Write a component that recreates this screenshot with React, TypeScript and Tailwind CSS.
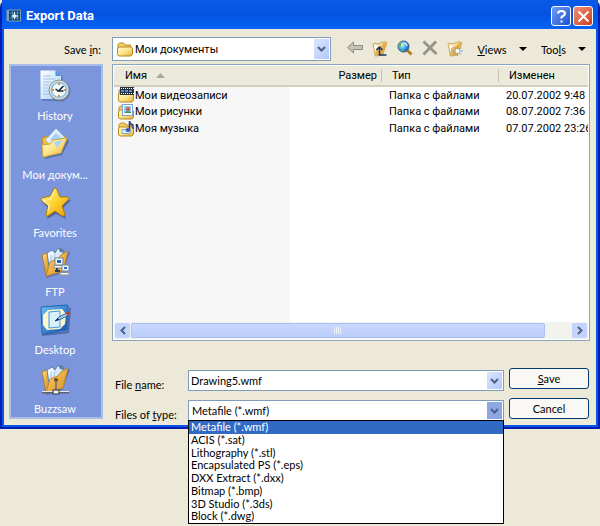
import type { ReactNode } from "react";

const files = [
  { name: "Мои видеозаписи", kind: "video", type: "Папка с файлами", modified: "20.07.2002 9:48" },
  { name: "Мои рисунки", kind: "picture", type: "Папка с файлами", modified: "08.07.2002 7:36" },
  { name: "Моя музыка", kind: "music", type: "Папка с файлами", modified: "07.07.2002 23:26" },
];

const fileTypes = [
  "Metafile (*.wmf)",
  "ACIS (*.sat)",
  "Lithography (*.stl)",
  "Encapsulated PS (*.eps)",
  "DXX Extract (*.dxx)",
  "Bitmap (*.bmp)",
  "3D Studio (*.3ds)",
  "Block (*.dwg)",
];

// gradients shared by all of the icons
function IconDefs() {
  return (
    <svg width="0" height="0" className="absolute" aria-hidden="true">
      <defs>
        <linearGradient id="folder" x1="0" y1="0" x2="1" y2="1">
          <stop offset="0" stopColor="#fffbd0" />
          <stop offset="0.5" stopColor="#fce48a" />
          <stop offset="1" stopColor="#e5ae35" />
        </linearGradient>
        <linearGradient id="orange" x1="0" y1="0" x2="1" y2="1">
          <stop offset="0" stopColor="#ffe0a0" />
          <stop offset="0.4" stopColor="#f0b850" />
          <stop offset="1" stopColor="#d08a1c" />
        </linearGradient>
        <linearGradient id="paper" x1="0" y1="0" x2="1" y2="1">
          <stop offset="0" stopColor="#ffffff" />
          <stop offset="1" stopColor="#a9d0f4" />
        </linearGradient>
        <linearGradient id="star" x1="0" y1="0" x2="1" y2="1">
          <stop offset="0" stopColor="#fff29a" />
          <stop offset="0.5" stopColor="#fdd32e" />
          <stop offset="1" stopColor="#eb9a12" />
        </linearGradient>
        <linearGradient id="pad" x1="0" y1="0" x2="1" y2="1">
          <stop offset="0" stopColor="#6fc0f8" />
          <stop offset="1" stopColor="#0c4fae" />
        </linearGradient>
        <radialGradient id="lens" cx="0.35" cy="0.35" r="0.7">
          <stop offset="0" stopColor="#d8f6ff" />
          <stop offset="0.5" stopColor="#4db4e8" />
          <stop offset="1" stopColor="#1558a8" />
        </radialGradient>
      </defs>
    </svg>
  );
}

function HistoryIcon() {
  return (
    <svg width="32" height="32" viewBox="0 0 32 32">
      <path d="M3 2h16l5 5v24H3z" fill="#48629f" opacity="0.5" />
      <path d="M1.500 .5h15l5.500 5.500v23h-20.500z" fill="url(#paper)" />
      <path d="M16.500.5l5.500 5.500h-5.500z" fill="#4d95dc" />
      <path d="M4 6h8M4 9h12M4 12h8M4 15h6M4 18h5M4 21h5M4 24h6" stroke="#9fc4ea" />
      <circle cx="21" cy="21" r="10.500" fill="#52668f" opacity="0.6" />
      <circle cx="20" cy="20" r="10" fill="#dde0e0" stroke="#8c8f94" />
      <circle cx="20" cy="20" r="7.500" fill="#f3fbff" stroke="#83bde0" strokeWidth="1.500" />
      <path d="M24.500 16l-5 5 5 0M19.500 21l-3-2" stroke="#182436" strokeWidth="1.500" fill="none" />
      <path d="M20 13v2M20 25v2M13 20h2M25 20h2" stroke="#e38d3a" strokeWidth="2" />
    </svg>
  );
}

function DocumentsIcon() {
  return (
    <svg width="32" height="32" viewBox="0 0 32 32">
      <path d="M5 30l18-4 7-14-3-3z" fill="#39528f" opacity="0.6" />
      <path d="M3 9l5-2 3 2 15-2 2 4-8 12-15 5z" fill="#e9bd4b" stroke="#b98b22" />
      <path d="M17 0l10 10-8 13-12-12z" fill="url(#paper)" stroke="#c7dff5" />
      <path d="M17 4l6 6-5 6-7-6z" fill="#a4d2fb" />
      <path d="M3 16l8-1 3-4 14-2-6 15-18 4z" fill="url(#folder)" stroke="#d0a43e" />
      <path d="M15 13l9-2-6 8z" fill="#a7d4ef" />
    </svg>
  );
}

function StarIcon() {
  return (
    <svg width="32" height="32" viewBox="0 0 32 32">
      <path d="M18 3l4 9 10 1-8 8 3 11-10-5-9 5 2-10-7-7 10-3z" fill="#3c4a78" opacity="0.65" />
      <path
        d="M16 1q2 0 2.500 3l2.500 6 8 0q2 1 0 3l-6 6 3 8q0 3-3 2l-7-5-7 5q-3 1-2-2l2-8-6-5q-2-2 0-3l8-2 3-5q0-3 2-3z"
        fill="url(#star)"
        stroke="#a87711"
      />
      <path d="M15 4l-3 8-8 2 6 4-1 6" stroke="#fff8c8" fill="none" />
    </svg>
  );
}

// open orange folder with blue sheets, base of the FTP and Buzzsaw places
function OpenFolder() {
  return (
    <>
      <path d="M7 31l16-5 7-20" stroke="#3d4c78" strokeWidth="2" fill="none" opacity="0.5" />
      <path d="M3 9l4-2 2 2 1 18-3 3z" fill="url(#orange)" stroke="#a87c34" />
      <path d="M8 7l5-3 3 3 3-5 6 2-3 17-11 6z" fill="url(#paper)" stroke="#6483a8" />
      <path d="M19 2l5 1 1 4-4-1z" fill="#587fac" />
      <path d="M12 9v14M16 8l-2 12" stroke="#a4c5e2" />
      <path d="M11 16l8-3 3-4 7-4-5 20-17 5z" fill="url(#orange)" stroke="#c48a2c" />
    </>
  );
}

function FtpIcon() {
  return (
    <svg width="32" height="32" viewBox="0 0 32 32">
      <OpenFolder />
      <rect x="16" y="12" width="8" height="7" fill="#f2f5f6" stroke="#7a8794" />
      <rect x="18" y="14" width="4" height="3" fill="#2468c7" />
      <path d="M15 19.500h10v2.500h-10z" fill="#f4f4f2" stroke="#8a9198" />
      <rect x="23" y="19" width="7" height="6" fill="#f2f5f6" stroke="#7a8794" />
      <rect x="25" y="21" width="3" height="2" fill="#2468c7" />
      <path d="M21 26.500h9v2.500h-9z" fill="#f4f4f2" stroke="#8a9198" />
      <path d="M18 22v4M16 25h5" stroke="#28405c" fill="none" strokeWidth="2" />
    </svg>
  );
}

function DesktopIcon() {
  return (
    <svg width="32" height="32" viewBox="0 0 32 32">
      <path d="M3 31l26-3 2-24" stroke="#334981" strokeWidth="2" fill="none" opacity="0.6" />
      <path d="M2 4q0-1 1-1l25-2q1 0 1 1l-1 23q0 1-1 1L4 30q-1 0-1-1z" fill="url(#pad)" stroke="#1e63ae" />
      <path d="M9 6l14-1 4 5-1 10-5 5-13 1-4-5V11z" fill="#fff6cc" />
      <path d="M10 8l11-1v16l-11 1z" fill="#d9f0ff" stroke="#3f96e0" />
      <path d="M16 17l4-4 8-4 2 2-8 4z" fill="#a6d4f4" stroke="#2367a9" />
      <path d="M27 9l3-1 1 2-3 2z" fill="#d43b24" />
      <path d="M16 17l3-3 1 2z" fill="#17283c" />
    </svg>
  );
}

function BuzzsawIcon() {
  return (
    <svg width="32" height="32" viewBox="0 0 32 32">
      <OpenFolder />
      <circle cx="17" cy="17" r="2" fill="#6b4b21" />
      <path d="M17 18v10" stroke="#7f7b70" strokeWidth="2" />
      <path d="M3 29.500h27" stroke="#5c6474" strokeWidth="2" />
      <path d="M3 28.500h27" stroke="#e9e9e2" />
      <rect x="14" y="27" width="6" height="4" fill="#efefe9" stroke="#30343c" />
    </svg>
  );
}

const places: { label: string; icon: ReactNode }[] = [
  { label: "History", icon: <HistoryIcon /> },
  { label: "Мои докум...", icon: <DocumentsIcon /> },
  { label: "Favorites", icon: <StarIcon /> },
  { label: "FTP", icon: <FtpIcon /> },
  { label: "Desktop", icon: <DesktopIcon /> },
  { label: "Buzzsaw", icon: <BuzzsawIcon /> },
];

function FolderIcon({ kind }: { kind?: string }) {
  return (
    <svg width="16" height="16" viewBox="0 0 16 16" className="shrink-0">
      <path d="M1 14.500V3.500L2.500 2h4L8 4h5.500v2" fill="#f3cf62" stroke="#b98a20" />
      <path d="M.5 13.500V7.500L2.500 6h11.500l1.500 1v6.500l-1.500 1.500h-12z" fill="url(#folder)" stroke="#b98a20" />
      {kind === "video" && (
        <>
          <path d="M2 0h14v8H2z" fill="#27303f" />
          <path d="M3 1.500h13M3 6.500h13" stroke="#fff" strokeDasharray="1 1" />
          <path d="M3 4h12" stroke="#5a8fc4" strokeWidth="2" strokeDasharray="3 1" />
        </>
      )}
      {kind === "picture" && (
        <>
          <rect x="4.500" y=".5" width="10" height="11" fill="#fff" stroke="#7fa3cf" />
          <rect x="6" y="2" width="7" height="7" fill="#8ccaf6" />
          <circle cx="10" cy="5" r="2" fill="#d85b3d" />
          <path d="M6 9l3-2 4 1v1z" fill="#3c9550" />
        </>
      )}
      {kind === "music" && (
        <>
          <path d="M4 8.500h8v4H4z" fill="#d8edff" stroke="#84a8c8" />
          <path d="M11.500 9V0q0 3 3.500 4v4" stroke="#27408c" strokeWidth="1.500" fill="none" />
          <ellipse cx="10" cy="9" rx="2.500" ry="2" fill="#3a5fb5" />
        </>
      )}
    </svg>
  );
}

function DropArrow({ pressed }: { pressed?: boolean }) {
  return (
    <span
      className={
        pressed
          ? "flex w-[15px] shrink-0 items-center justify-center self-stretch bg-[#8ea6e4]"
          : "flex w-[15px] shrink-0 items-center justify-center self-stretch bg-linear-to-br from-[#dbe5fe] to-[#b2c8f8]"
      }
      aria-hidden="true"
    >
      <svg width="9" height="6" viewBox="0 0 9 6">
        <path d="M1 1l3.500 3.500L8 1" fill="none" stroke="#4d6185" strokeWidth="2" />
      </svg>
    </span>
  );
}

function ToolbarFolder() {
  return (
    <>
      <path d="M1 5l2-1 2 1 8-2.500 1.500 2-4 11.500-7 1z" fill="#f7dfa0" stroke="#c9a863" />
      <path d="M2 6q3-1 4 1l-2 9z" fill="#fffdf2" />
      <path d="M5 9l4-1 2-3 4-2-4 12-8 2z" fill="url(#orange)" stroke="#dcae58" />
    </>
  );
}

function Toolbar() {
  return (
    <div className="flex items-center gap-[9px]">
      <button type="button" aria-label="Back">
        <svg width="16" height="20" viewBox="0 0 16 20">
          <path d="M.5 8.500L6.500 3v3.500h9v4h-9V14z" fill="#c4c2b6" stroke="#8f8d82" />
        </svg>
      </button>
      <button type="button" aria-label="Up one level">
        <svg width="16" height="20" viewBox="0 0 16 20">
          <ToolbarFolder />
          <path d="M4.500 11L7.500 8 10.500 11M7.500 8.500v7.500h7" fill="none" stroke="#14386e" strokeWidth="1.500" />
        </svg>
      </button>
      <button type="button" aria-label="Search the Web">
        <svg width="16" height="20" viewBox="0 0 16 20">
          <path d="M10.500 11.500l4 4" stroke="#b77a25" strokeWidth="3" />
          <circle cx="6.500" cy="7.500" r="5.500" fill="url(#lens)" stroke="#315c91" />
          <path d="M1.500 8q0-4 3-5 0 4-1 5zM3 11q3-1 4 1-2 1-4-1z" fill="#5eb956" />
          <path d="M7 4q3 0 3 3" stroke="#fff" fill="none" />
        </svg>
      </button>
      <button type="button" aria-label="Delete">
        <svg width="16" height="20" viewBox="0 0 16 20">
          <path d="M1.500 2.500L14.500 15M14 2.500L1.500 15.500" stroke="#97958a" strokeWidth="3" />
        </svg>
      </button>
      <button type="button" aria-label="Create new folder">
        <svg width="16" height="20" viewBox="0 0 16 20">
          <ToolbarFolder />
          <path d="M10.500 7v10M5.500 12h10M7 8.500l7 7M14 8.500l-7 7" stroke="#5aa6ea" />
          <circle cx="10.500" cy="12" r="2" fill="#fff" />
        </svg>
      </button>
    </div>
  );
}

function MenuButton({ children }: { children: ReactNode }) {
  return (
    <button type="button" className="flex items-center gap-3">
      <span>{children}</span>
      <svg width="8" height="4" viewBox="0 0 8 4" aria-hidden="true">
        <path d="M0 0h8L4 4z" fill="#000" />
      </svg>
    </button>
  );
}

function TitleBar() {
  return (
    <header className="flex h-[29px] items-center gap-1 bg-linear-to-b from-[#0a5ae8] via-[#0553e3] to-[#0463f5] pt-[3px] pr-[5px] pl-1">
      <svg width="16" height="14" viewBox="0 0 15 14" aria-hidden="true">
        <path d="M0 1h3v11H0z" fill="#8fa0ae" />
        <path d="M2 1h12v11H2z" fill="#123d68" stroke="#7ba4bd" />
        <path d="M3 4h10M3 9h10M6 2v9M11 2v9" stroke="#4b91bf" />
        <path d="M8 2l1 4 4 1-4 1-1 3-1-3-3-1 3-1z" fill="#e7fbff" />
      </svg>
      <h1 className="grow font-['Roboto',sans-serif] text-[13px] leading-[16px] font-bold text-white">
        Export Data
      </h1>
      <div className="flex gap-[2px]">
        <button
          type="button"
          aria-label="Help"
          className="flex h-5 w-5 items-center justify-center rounded-[3px] border border-white bg-linear-to-br from-[#6f9cf4] to-[#1c4fd0]"
        >
          <svg width="13" height="15" viewBox="0 0 13 15">
            <path
              d="M3 4.500Q3 2 6.500 2T10 4.500Q10 6 8 7T6.500 9.500M6.500 11.500v2"
              fill="none"
              stroke="#fff"
              strokeWidth="2"
            />
          </svg>
        </button>
        <button
          type="button"
          aria-label="Close"
          className="flex h-5 w-5 items-center justify-center rounded-[3px] border border-white bg-linear-to-br from-[#ee9078] to-[#cc3a10]"
        >
          <svg width="13" height="13" viewBox="0 0 13 13">
            <path d="M1.500 1.500l10 10M11.500 1.500l-10 10" stroke="#fff" strokeWidth="2" />
          </svg>
        </button>
      </div>
    </header>
  );
}

function FileList() {
  return (
    <div className="flex h-[277px] flex-col border border-[#8ba5bd] bg-white p-px font-['Roboto',sans-serif] text-[11px]">
      <div className="grow overflow-hidden bg-[linear-gradient(90deg,#f7f7f7_176px,#ffffff_176px)]">
        <table className="w-full table-fixed border-collapse whitespace-nowrap">
          <thead>
            <tr className="h-[20px] border-b-2 border-[#d2cfbd] bg-[#ebeadb] text-left">
              <th className="w-[176px] pl-[11px] font-normal">
                <span className="flex items-center gap-[9px]">
                  Имя
                  <svg width="9" height="5" viewBox="0 0 9 5" aria-hidden="true">
                    <path d="M4.500 0L9 5H0z" fill="#aca899" />
                  </svg>
                </span>
              </th>
              <th className="w-[92px] text-right font-normal">
                <span className="block border-r border-[#c7c5b2] pr-1">Размер</span>
              </th>
              <th className="w-[117px] pl-[10px] font-normal">
                <span className="block border-r border-[#c7c5b2]">Тип</span>
              </th>
              <th className="pl-[10px] font-normal">Изменен</th>
            </tr>
          </thead>
          <tbody>
            {files.map((file) => (
              <tr key={file.name} className="h-[17px]">
                <td className="pl-1">
                  <span className="flex items-center gap-px">
                    <FolderIcon kind={file.kind} />
                    {file.name}
                  </span>
                </td>
                <td></td>
                <td className="pl-[7px]">{file.type}</td>
                <td className="pl-[7px]">{file.modified}</td>
              </tr>
            ))}
          </tbody>
        </table>
      </div>
      <div className="flex h-[17px] shrink-0 gap-px bg-[#f3f3ee] p-px">
        <button
          type="button"
          aria-label="Scroll left"
          className="flex w-[15px] items-center justify-center rounded-xs bg-[#c3d3fd]"
        >
          <svg width="6" height="9" viewBox="0 0 6 9">
            <path d="M5 1L1.500 4.500 5 8" fill="none" stroke="#4d6185" strokeWidth="2" />
          </svg>
        </button>
        <div className="flex grow">
          <div className="flex w-[94%] items-center justify-center gap-px rounded-xs border border-[#a9c0f5] bg-linear-to-b from-[#cad8ff] to-[#bacdfb]">
            <span className="h-[7px] w-px bg-[#eef4fe]"></span>
            <span className="h-[7px] w-px bg-[#eef4fe]"></span>
            <span className="h-[7px] w-px bg-[#eef4fe]"></span>
            <span className="h-[7px] w-px bg-[#eef4fe]"></span>
          </div>
        </div>
        <button
          type="button"
          aria-label="Scroll right"
          className="flex w-[15px] items-center justify-center rounded-xs bg-[#c3d3fd]"
        >
          <svg width="6" height="9" viewBox="0 0 6 9">
            <path d="M1 1l3.500 3.500L1 8" fill="none" stroke="#4d6185" strokeWidth="2" />
          </svg>
        </button>
      </div>
    </div>
  );
}

export default function App() {
  return (
    <div className="min-h-screen bg-[#ece9d8] font-['Lato','Roboto',sans-serif] text-[11px] leading-[13px] text-black">
      <IconDefs />
      <main className="rounded-t-[7px] border-x-2 border-b-2 border-[#0420b4] bg-[#0855e6]">
        <TitleBar />
        <div className="mx-[2px] grid grid-cols-[94px_minmax(0,1fr)] gap-x-[9px] gap-y-[3px] bg-[#ece9d8] pt-2 pr-[6px] pb-1 pl-[5px]">
          <label htmlFor="folder-select" className="self-center pr-[2px] text-right">
            Save <u>i</u>n:
          </label>
          <div className="flex h-6 items-center">
            <div className="flex h-6 w-[219px] items-center border border-[#7f9db9] bg-white p-px pl-1">
              <FolderIcon />
              <select
                id="folder-select"
                className="min-w-0 grow appearance-none bg-transparent pl-[2px] font-['Roboto',sans-serif] text-[11px] outline-none"
              >
                <option>Мои документы</option>
              </select>
              <DropArrow />
            </div>
            <div className="flex grow items-center justify-between pr-1 pl-4">
              <Toolbar />
              <MenuButton>
                <u>V</u>iews
              </MenuButton>
              <MenuButton>
                Too<u>l</u>s
              </MenuButton>
            </div>
          </div>

          <nav className="mb-[2px] border-2 border-[#a9bde8] bg-[#7b96dc]">
            <ul className="flex h-full flex-col pr-[2px]">
              {places.map((place) => (
                <li key={place.label} className="flex-1">
                  <a href="#" className="flex flex-col items-center gap-[6px] pt-1 text-white">
                    {place.icon}
                    <span className="leading-[16px]">{place.label}</span>
                  </a>
                </li>
              ))}
            </ul>
          </nav>

          <div className="flex flex-col">
            <FileList />
            <div className="mt-[27px] grid grid-cols-[73px_minmax(0,1fr)_80px] grid-rows-[23px_23px] items-end gap-y-[7px] pr-px pl-[3px]">
              <label htmlFor="file-name">
                File <u>n</u>ame:
              </label>
              <div className="mr-[5px] flex h-[21px] items-center border border-[#7f9db9] bg-white p-px">
                <input
                  id="file-name"
                  type="text"
                  defaultValue="Drawing5.wmf"
                  className="min-w-0 grow pl-px outline-none"
                />
                <DropArrow />
              </div>
              <button
                type="button"
                className="h-[21px] self-start rounded-[3px] border border-[#003c74] bg-[#f9f8f4]"
              >
                <u>S</u>ave
              </button>

              <label htmlFor="file-type">
                Files of <u>t</u>ype:
              </label>
              <div className="relative mr-[5px] flex h-[21px] items-center border border-[#7f9db9] bg-white p-px">
                <select id="file-type" className="min-w-0 grow appearance-none bg-transparent pl-[2px] outline-none">
                  {fileTypes.map((type) => (
                    <option key={type}>{type}</option>
                  ))}
                </select>
                <DropArrow pressed />
                <ul
                  role="listbox"
                  aria-label="Files of type"
                  className="absolute top-full -right-px -left-px flex h-[104px] flex-col border border-black bg-white"
                >
                  {fileTypes.map((type, i) => (
                    <li
                      key={type}
                      role="option"
                      aria-selected={i === 0}
                      className={
                        i === 0
                          ? "flex-1 bg-[#316ac5] pl-[2px] leading-[12px] text-white"
                          : "flex-1 pl-[2px] leading-[12px]"
                      }
                    >
                      {type}
                    </li>
                  ))}
                </ul>
              </div>
              <button
                type="button"
                className="h-[21px] self-start rounded-[3px] border border-[#003c74] bg-[#f9f8f4]"
              >
                Cancel
              </button>
            </div>
          </div>
        </div>
        <div className="h-[2px]"></div>
      </main>
    </div>
  );
}
